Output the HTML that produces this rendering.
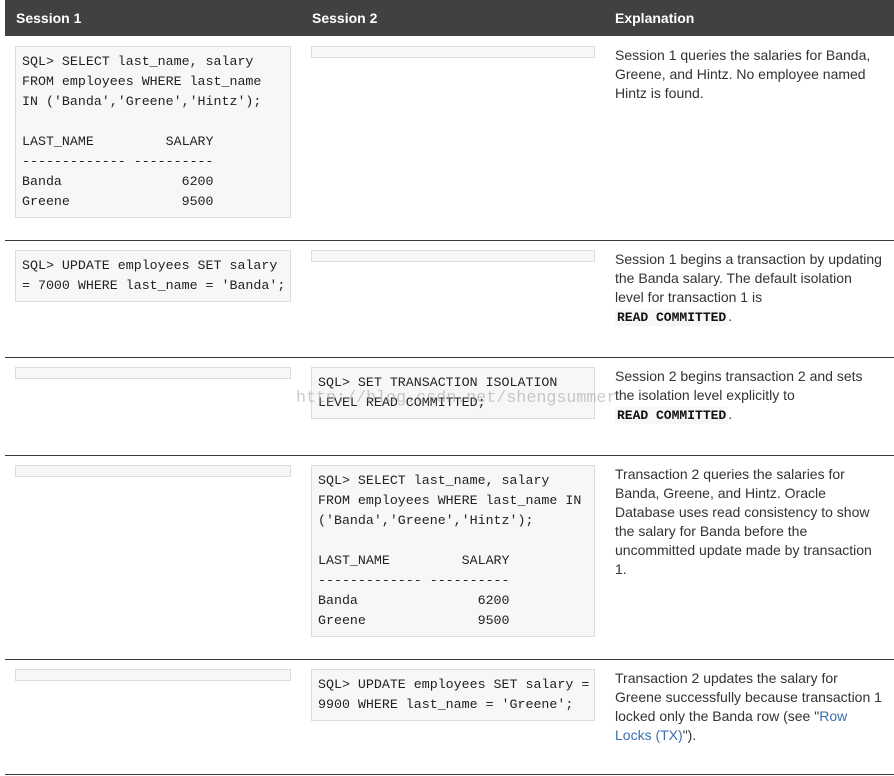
<!DOCTYPE html>
<html><head><meta charset="utf-8"><style>
body{margin:0;width:894px;height:776px;background:#fff;position:relative;overflow:hidden;font-family:"Liberation Sans",Arial,sans-serif;}
.hdr{position:absolute;left:5px;top:0;width:889px;height:36px;background:#414141;}
.h{position:absolute;top:10px;color:#fff;font-weight:bold;font-size:14px;}
.sep{position:absolute;left:5px;width:889px;height:1px;background:#3a3a3a;}
.box{position:absolute;background:#f7f7f9;border:1px solid #dcdce0;box-sizing:border-box;}
pre{position:absolute;margin:0;font-family:"Liberation Mono","Courier New",monospace;font-size:13.3px;line-height:20px;color:#222;}
.ex{position:absolute;left:615px;font-size:14px;line-height:19px;color:#333;white-space:nowrap;}
code{font-family:"Liberation Mono",monospace;font-weight:bold;font-size:13px;background:#f7f7f7;color:#111;padding:1px 2px;}
a{color:#3a6fb0;text-decoration:none;}
.wm{position:absolute;left:296px;top:389px;font-family:"Liberation Mono",monospace;font-size:16.7px;color:rgba(150,150,150,0.5);}
</style></head><body>
<div class="hdr"></div>
<div class="h" style="left:16px">Session 1</div>
<div class="h" style="left:312px">Session 2</div>
<div class="h" style="left:615px">Explanation</div>

<div class="box" style="left:15px;top:46px;width:276px;height:172px"></div>
<pre style="left:22px;top:52px">SQL&gt; SELECT last_name, salary
FROM employees WHERE last_name
IN ('Banda','Greene','Hintz');

LAST_NAME         SALARY
------------- ----------
Banda               6200
Greene              9500</pre>
<div class="box" style="left:311px;top:46px;width:284px;height:12px"></div>
<div class="ex" style="top:46px">Session 1 queries the salaries for Banda,<br>Greene, and Hintz. No employee named<br>Hintz is found.</div>
<div class="sep" style="top:240px"></div>

<div class="box" style="left:15px;top:250px;width:276px;height:52px"></div>
<pre style="left:22px;top:256px">SQL&gt; UPDATE employees SET salary
= 7000 WHERE last_name = 'Banda';</pre>
<div class="box" style="left:311px;top:250px;width:284px;height:12px"></div>
<div class="ex" style="top:250px">Session 1 begins a transaction by updating<br>the Banda salary. The default isolation<br>level for transaction 1 is<br><code>READ COMMITTED</code>.</div>
<div class="sep" style="top:357px"></div>

<div class="box" style="left:15px;top:367px;width:276px;height:12px"></div>
<div class="box" style="left:311px;top:367px;width:284px;height:52px"></div>
<pre style="left:318px;top:373px">SQL&gt; SET TRANSACTION ISOLATION
LEVEL READ COMMITTED;</pre>
<div class="ex" style="top:367px">Session 2 begins transaction 2 and sets<br>the isolation level explicitly to<br><code>READ COMMITTED</code>.</div>
<div class="wm">http://blog.csdn.net/shengsummer</div>
<div class="sep" style="top:455px"></div>

<div class="box" style="left:15px;top:465px;width:276px;height:12px"></div>
<div class="box" style="left:311px;top:465px;width:284px;height:172px"></div>
<pre style="left:318px;top:471px">SQL&gt; SELECT last_name, salary
FROM employees WHERE last_name IN
('Banda','Greene','Hintz');

LAST_NAME         SALARY
------------- ----------
Banda               6200
Greene              9500</pre>
<div class="ex" style="top:465px">Transaction 2 queries the salaries for<br>Banda, Greene, and Hintz. Oracle<br>Database uses read consistency to show<br>the salary for Banda before the<br>uncommitted update made by transaction<br>1.</div>
<div class="sep" style="top:659px"></div>

<div class="box" style="left:15px;top:669px;width:276px;height:12px"></div>
<div class="box" style="left:311px;top:669px;width:284px;height:52px"></div>
<pre style="left:318px;top:675px">SQL&gt; UPDATE employees SET salary =
9900 WHERE last_name = 'Greene';</pre>
<div class="ex" style="top:669px">Transaction 2 updates the salary for<br>Greene successfully because transaction 1<br>locked only the Banda row (see "<a>Row</a><br><a>Locks (TX)</a>").</div>
<div class="sep" style="top:774px"></div>
</body></html>
